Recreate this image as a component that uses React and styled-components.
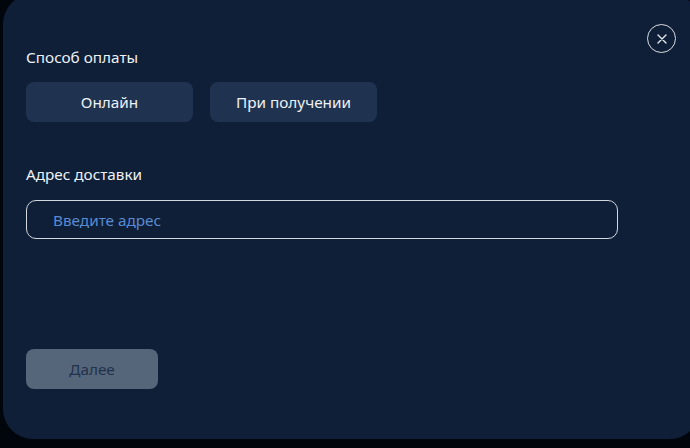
import styled, { createGlobalStyle } from "styled-components";

const GlobalStyle = createGlobalStyle`
  html, body {
    margin: 0;
    padding: 0;
    background: #01060d;
    overflow: hidden;
  }
  body {
    font-family: "Noto Sans", "Open Sans", sans-serif;
  }
`;

const Screen = styled.div`
  width: 690px;
  height: 448px;
  overflow: hidden;
`;

const Panel = styled.div`
  position: relative;
  box-sizing: border-box;
  width: 697px;
  height: 445px;
  margin: -6px 0 0 3px;
  padding: 53px 23px 0;
  border-radius: 30px;
  background: #0f1f38;
  display: flex;
  flex-direction: column;
  align-items: flex-start;
`;

const CloseButton = styled.button`
  position: absolute;
  top: 30px;
  right: 24px;
  width: 29px;
  height: 29px;
  padding: 0;
  border: 1.5px solid #d9dde4;
  border-radius: 50%;
  background: transparent;
  display: flex;
  align-items: center;
  justify-content: center;
  cursor: pointer;
`;

const Label = styled.div`
  font-size: 15.3px;
  line-height: 20px;
  color: #eef1f5;
  margin-top: ${(p) => p.$top || 0}px;
`;

const Options = styled.div`
  display: flex;
  gap: 17px;
  margin-top: 15px;
`;

const Option = styled.button`
  width: 167px;
  height: 40px;
  border: none;
  border-radius: 8px;
  background: #1f3351;
  color: #eef1f5;
  font-family: inherit;
  font-size: 15.3px;
  cursor: pointer;
`;

const AddressInput = styled.input`
  box-sizing: border-box;
  width: 592px;
  height: 39px;
  margin-top: 16px;
  padding: 0 26px;
  border: 1.5px solid #d3d7de;
  border-radius: 10px;
  background: transparent;
  color: #eef1f5;
  font-family: inherit;
  font-size: 15.3px;
  outline: none;

  &::placeholder {
    color: #5a8bd0;
  }
`;

const NextButton = styled.button`
  width: 132px;
  height: 40px;
  margin-top: 110px;
  border: none;
  border-radius: 8px;
  background: #55657a;
  color: #22324a;
  font-family: inherit;
  font-size: 15.3px;
`;

export default function App() {
  return (
    <Screen>
      <GlobalStyle />
      <Panel>
        <CloseButton aria-label="Закрыть">
          <svg width="10" height="10" viewBox="0 0 10 10">
            <path d="M1 1L9 9M9 1L1 9" stroke="#e4e7ec" strokeWidth="1.4" strokeLinecap="round" />
          </svg>
        </CloseButton>
        <Label>Способ оплаты</Label>
        <Options>
          <Option>Онлайн</Option>
          <Option>При получении</Option>
        </Options>
        <Label $top={42}>Адрес доставки</Label>
        <AddressInput placeholder="Введите адрес" />
        <NextButton disabled>Далее</NextButton>
      </Panel>
    </Screen>
  );
}
